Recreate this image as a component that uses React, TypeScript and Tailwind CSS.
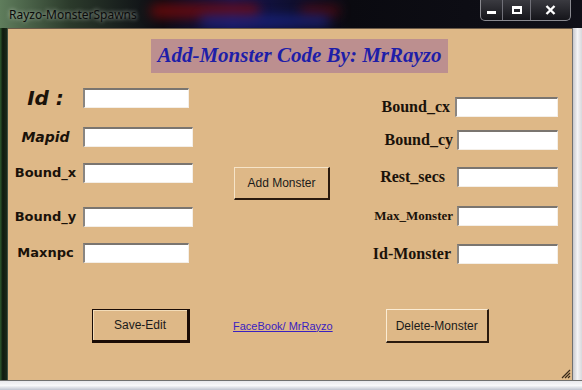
import React from 'react';

const leftRows = [
  { label: 'Id :', cls: 'text-[20px] italic font-bold', w: 'w-[106px]', mt: 'mt-[15px]', font: '"DejaVu Sans", sans-serif' },
  { label: 'Mapid', cls: 'text-[14px] italic font-bold', w: 'w-[110px]', mt: 'mt-[19px]', font: '"DejaVu Sans", sans-serif' },
  { label: 'Bound_x', cls: 'text-[13px] font-bold', w: 'w-[110px]', mt: 'mt-[16px]', font: '"DejaVu Sans", sans-serif' },
  { label: 'Bound_y', cls: 'text-[13px] font-bold', w: 'w-[110px]', mt: 'mt-[24px]', font: '"DejaVu Sans", sans-serif' },
  { label: 'Maxnpc', cls: 'text-[13px] font-bold', w: 'w-[106px]', mt: 'mt-[16px]', font: '"DejaVu Sans", sans-serif' },
];

const rightRows = [
  { label: 'Bound_cx', cls: 'text-[16px] mr-[5px]', inW: 'w-[103px]', mt: 'mt-[24px]' },
  { label: 'Bound_cy', cls: 'text-[16px] mr-[4px]', inW: 'w-[101px]', mt: 'mt-[13px]' },
  { label: 'Rest_secs', cls: 'text-[16px] mr-[12px]', inW: 'w-[101px]', mt: 'mt-[17px]' },
  { label: 'Max_Monster', cls: 'text-[13px] mr-[4px]', inW: 'w-[101px]', mt: 'mt-[19px]' },
  { label: 'Id-Monster', cls: 'text-[16px] mr-[6px]', inW: 'w-[101px]', mt: 'mt-[18px]' },
];

const Field = ({ w }: { w: string }) => (
  <div
    className={`${w} h-[20px] bg-white border-t-2 border-l-2 border-b border-r border-t-[#7a7570] border-l-[#8a8580] border-b-[#f4efe8] border-r-[#f4efe8]`}
  />
);

const App = () => {
  return (
    <div className="w-[582px] h-[390px] flex flex-col bg-[#0c0c10] overflow-hidden">
      {/* title bar */}
      <div className="h-[28px] flex items-start relative bg-[linear-gradient(90deg,#5f7d5c_0%,#2b3a2b_12%,#0a0a12_28%,#141450_40%,#0a0a10_60%,#101018_100%)]">
        <div className="absolute left-[150px] top-[4px] w-[110px] h-[14px] rounded-full bg-[#7a0a0a] blur-[6px] opacity-80" />
        <div className="absolute left-[300px] top-[6px] w-[40px] h-[10px] rounded-full bg-[#6a0a0a] blur-[6px] opacity-70" />
        <div className="absolute left-[200px] top-[16px] w-[130px] h-[10px] rounded-full bg-[#1a2a9a] blur-[6px] opacity-70" />
        <span
          className="relative ml-[9px] mt-[6px] text-[12px] text-[#0a0a0a] [text-shadow:0_0_4px_#c8d4c8]"
          style={{ fontFamily: '"Noto Sans", sans-serif' }}
        >
          Rayzo-MonsterSpawns
        </span>
        <div className="relative ml-auto mr-[11px] flex h-[21px] rounded-b-[5px] border border-t-0 border-[#8a8a90] bg-[linear-gradient(180deg,#3a3a40,#15151a)] overflow-hidden">
          <div className="w-[22px] flex items-center justify-center border-r border-[#707078]">
            <div className="w-[9px] h-[3px] bg-white mt-[4px]" />
          </div>
          <div className="w-[28px] flex items-center justify-center border-r border-[#707078]">
            <div className="w-[10px] h-[8px] border-2 border-white border-t-[3px]" />
          </div>
          <div className="w-[39px] flex items-center justify-center">
            <svg width="11" height="10" viewBox="0 0 11 10">
              <path d="M1.5 1 L9.5 9 M9.5 1 L1.5 9" stroke="white" strokeWidth="2.4" />
            </svg>
          </div>
        </div>
      </div>

      <div className="flex flex-1">
        {/* left frame */}
        <div className="w-[8px] bg-[linear-gradient(90deg,#2e5a2e,#0e1a0e_40%,#1a2a1a)] border-r border-[#405040]" />

        {/* client */}
        <div
          className="relative w-[564px] h-[352px] bg-[#deb887] border-t border-[#6a5a48] flex flex-col"
          style={{ fontFamily: '"Liberation Sans", sans-serif' }}
        >
          <div className="mt-[10px] ml-[143px] w-[297px] h-[34px] bg-[#bc8f8f] flex items-center justify-center">
            <span
              className="text-[21px] font-bold italic text-[#1e1ea8]"
              style={{ fontFamily: '"Liberation Serif", serif' }}
            >
              Add-Monster Code By: MrRayzo
            </span>
          </div>

          <div className="h-[236px] flex">
            {/* left column */}
            <div className="flex flex-col w-[185px]">
              {leftRows.map((r) => (
                <div key={r.label} className={`flex items-center h-[20px] ${r.mt}`}>
                  <div
                    className={`w-[67px] ml-[4px] text-center text-[#1a120a] ${r.cls}`}
                    style={{ fontFamily: r.font }}
                  >
                    {r.label}
                  </div>
                  <div className="ml-[4px]">
                    <Field w={r.w} />
                  </div>
                </div>
              ))}
            </div>

            {/* middle */}
            <div className="ml-[41px] mt-[94px]">
              <button className="w-[96px] h-[33px] bg-[#deb887] border-t border-l border-b-2 border-r-2 border-t-[#f6e4c8] border-l-[#f6e4c8] border-b-[#2a1a0e] border-r-[#2a1a0e] text-[12px] text-[#1a1a1a]">
                Add Monster
              </button>
            </div>

            {/* right column */}
            <div className="ml-auto mr-[14px] flex flex-col items-end">
              {rightRows.map((r) => (
                <div key={r.label} className={`flex items-center h-[20px] ${r.mt}`}>
                  <span
                    className={`font-bold text-[#1a120a] ${r.cls}`}
                    style={{ fontFamily: '"Liberation Serif", serif' }}
                  >
                    {r.label}
                  </span>
                  <Field w={r.inW} />
                </div>
              ))}
            </div>
          </div>

          {/* bottom row */}
          <div className="flex items-center">
            <button className="ml-[84px] w-[98px] h-[34px] bg-[#deb887] border border-b-[3px] border-r-[3px] border-[#1a0c06] shadow-[inset_1px_1px_0_#f3dcb8] text-[12px] text-[#1a1a1a]">
              Save-Edit
            </button>
            <span className="ml-[43px] text-[11px] text-[#3a22c0] underline">FaceBook/ MrRayzo</span>
            <button className="ml-[53px] w-[103px] h-[34px] bg-[#deb887] border-t border-l border-b-2 border-r-2 border-t-[#fbecd4] border-l-[#fbecd4] border-b-[#2a1a0e] border-r-[#2a1a0e] text-[12px] text-[#1a1a1a]">
              Delete-Monster
            </button>
          </div>

          <svg className="absolute right-[1px] bottom-[1px]" width="11" height="11" viewBox="0 0 11 11">
            <path d="M10 2 L2 10 M10 5 L5 10 M10 8 L8 10" stroke="#3a2a18" strokeWidth="1.2" />
          </svg>
        </div>

        {/* right frame */}
        <div className="flex-1 bg-[linear-gradient(90deg,#c8c8cc,#f4f4f6_50%,#d8d8dc)] border-l border-[#707070]" />
      </div>

      {/* bottom frame */}
      <div className="h-[10px] bg-[linear-gradient(180deg,#e8e8ec,#f8f8fa_50%,#c0c4d0)] border-t border-[#707070]" />
    </div>
  );
};

export default App;
